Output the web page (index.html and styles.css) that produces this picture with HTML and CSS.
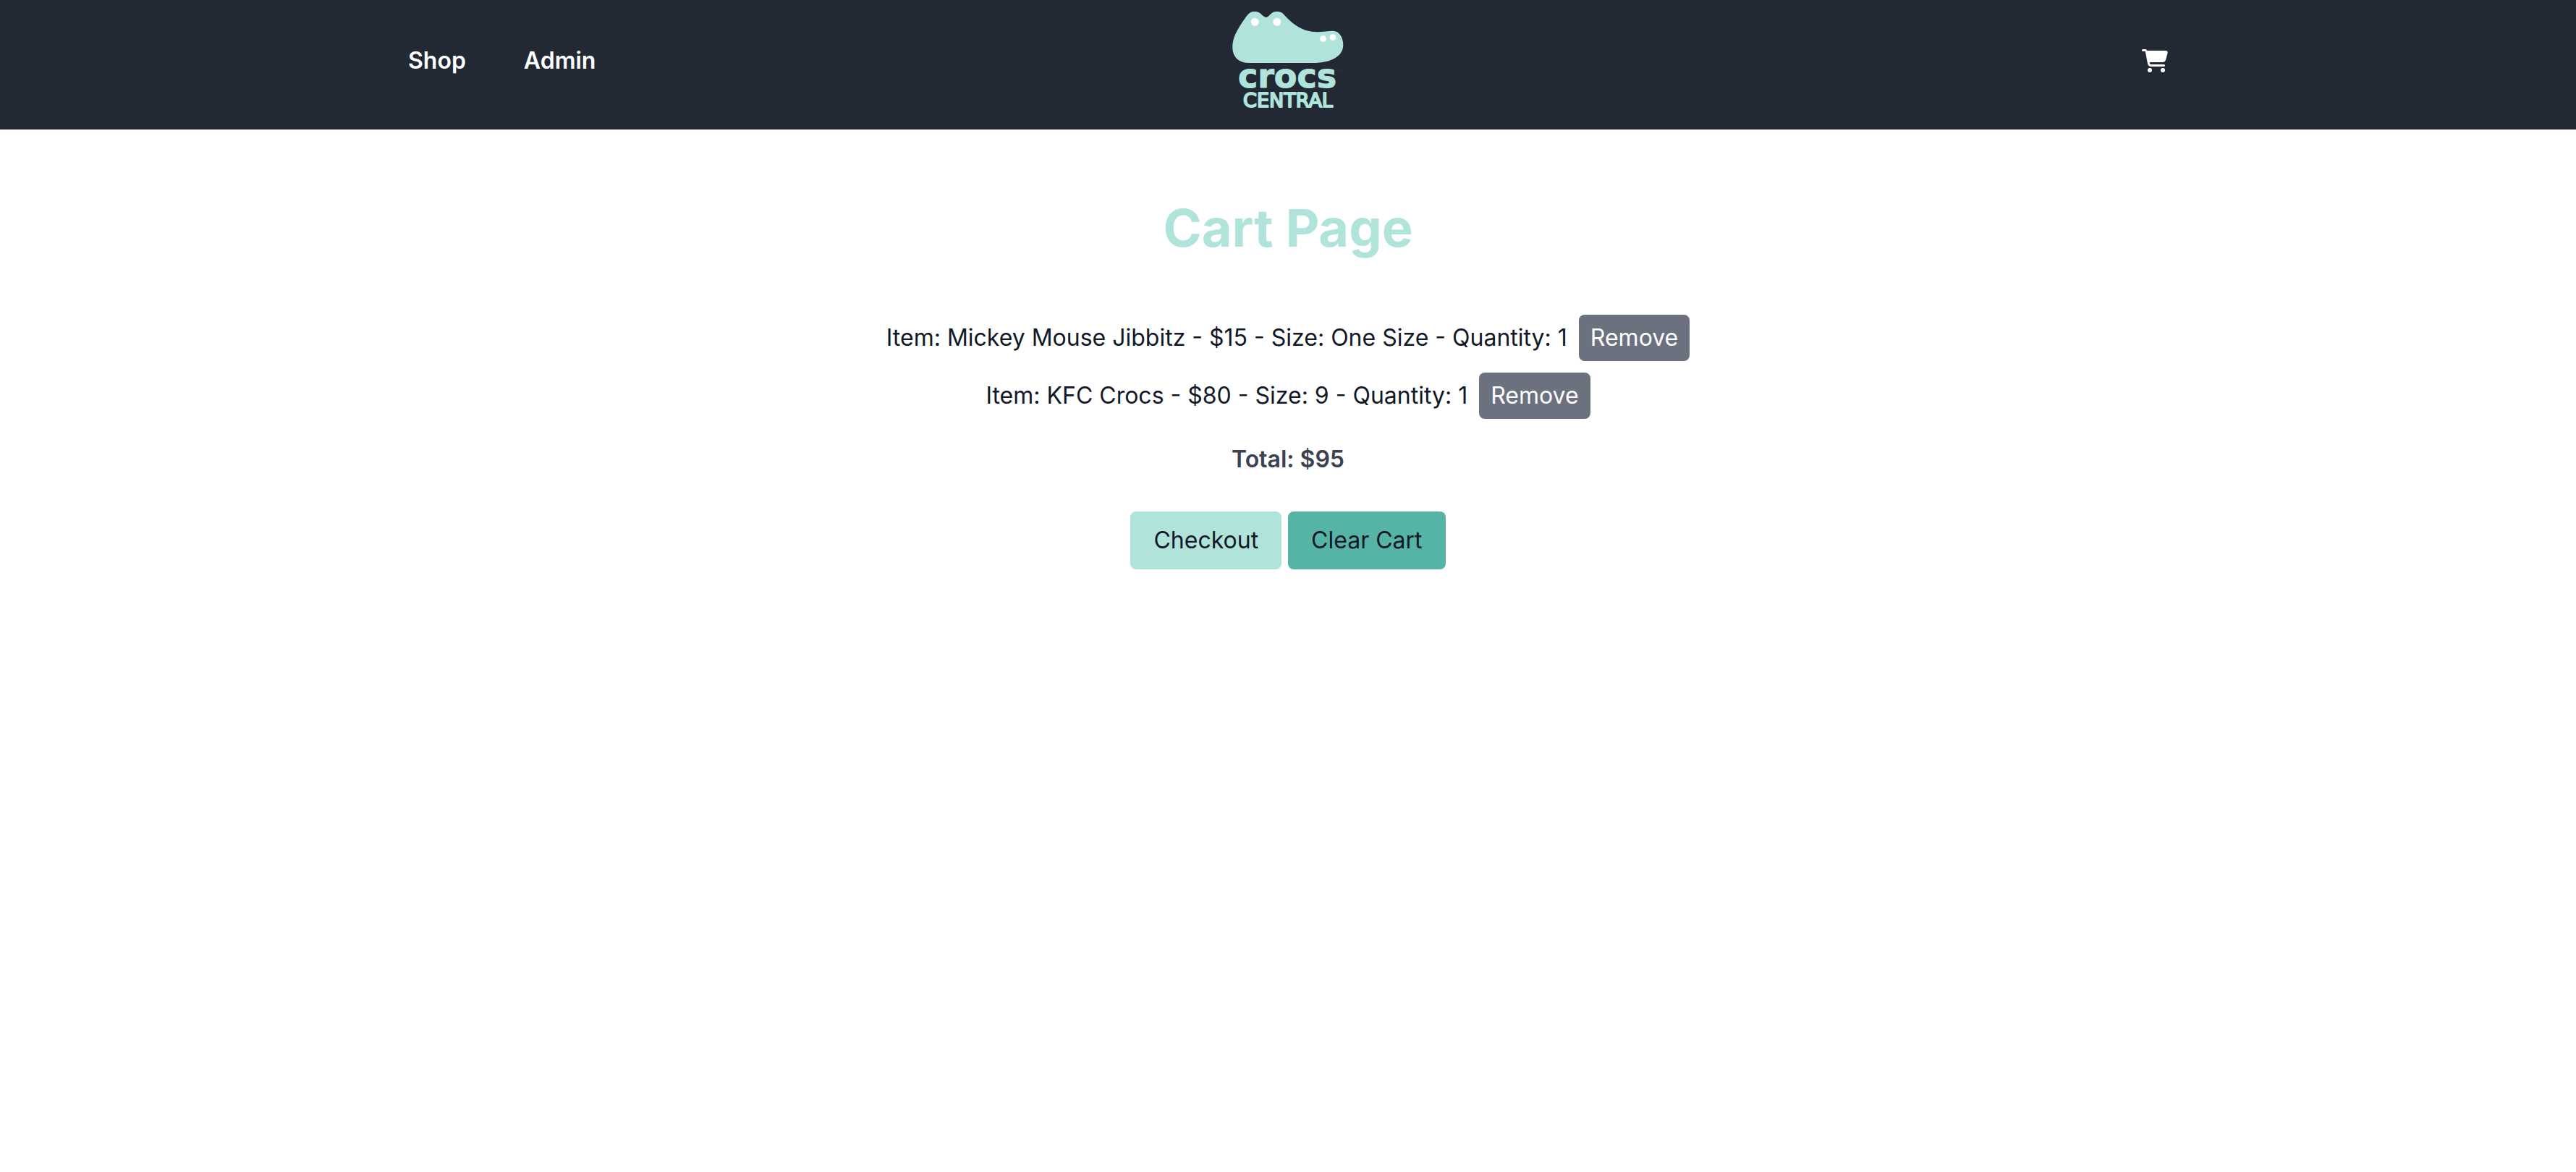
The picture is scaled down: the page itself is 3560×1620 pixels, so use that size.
FILE: index.html
```html
<!DOCTYPE html>
<html lang="en">
<head>
  <meta charset="utf-8">
  <meta name="viewport" content="width=device-width, initial-scale=1">
  <title>Cart - Crocs Central</title>
  <link rel="stylesheet" href="styles.css">
</head>
<body>
  <header class="site-header">
    <div class="header-inner">
      <nav class="nav">
        <a class="nav-link" href="#shop">Shop</a>
        <a class="nav-link" href="#admin">Admin</a>
      </nav>
      <a class="logo" href="#home" aria-label="Crocs Central">
        <svg class="logo-art" viewBox="0 0 200 167" width="200" height="167">
          <path class="mint" d="M23.3 66C23 54 28 43 40.500 25.500C46 17.500 48.500 16 54 16C60 16 62 18.500 65 21.500C68.500 24.700 71 24.700 74 21.500C77.500 18 79 16 85 16C91 16 92.500 18 97 23C108 34.500 119 42 133 43.800C145 45.300 153 42.700 162 42.700C171 42.700 176.300 52 176.300 62C176.300 78 159 87 135 87L46 87C32 87 23.600 79 23.300 66Z"/>
          <g class="eyes">
            <circle cx="54.300" cy="30.300" r="5.500"/>
            <circle cx="84.800" cy="30.300" r="5.500"/>
            <circle cx="148.500" cy="53.500" r="4.400"/>
            <circle cx="162" cy="51.700" r="4.400"/>
          </g>
          <text class="logo-name" x="99" y="121" text-anchor="middle">crocs</text>
          <text class="logo-sub" x="100" y="148" text-anchor="middle">CENTRAL</text>
          <text class="logo-tm" x="168" y="100">TM</text>
        </svg>
      </a>
      <a class="cart-link" href="#cart" aria-label="Cart">
        <svg class="cart-icon" viewBox="0 0 576 512" width="36" height="32">
          <path d="M0 24C0 10.700 10.700 0 24 0H69.500c22 0 41.500 12.800 50.600 32h411c26.300 0 45.500 25 38.600 50.400l-41 152.300c-8.500 31.400-37 53.300-69.500 53.300H170.700l5.400 28.500c2.200 11.300 12.100 19.500 23.600 19.500H488c13.300 0 24 10.700 24 24s-10.700 24-24 24H199.700c-34.600 0-64.300-24.600-70.700-58.500L77.400 54.500c-.7-3.800-4-6.500-7.900-6.500H24C10.700 48 0 37.300 0 24zM128 464a48 48 0 1 1 96 0 48 48 0 1 1 -96 0zm336-48a48 48 0 1 1 0 96 48 48 0 1 1 0-96z"/>
        </svg>
      </a>
    </div>
  </header>
  <main class="cart">
    <h1 class="cart-title">Cart Page</h1>
    <ul class="cart-items">
      <li class="cart-item">
        <span>Item: Mickey Mouse Jibbitz - $15 - Size: One Size - Quantity: 1</span>
        <button class="btn btn-remove" type="button">Remove</button>
      </li>
      <li class="cart-item">
        <span>Item: KFC Crocs - $80 - Size: 9 - Quantity: 1</span>
        <button class="btn btn-remove" type="button">Remove</button>
      </li>
    </ul>
    <p class="cart-total">Total: $95</p>
    <div class="cart-actions">
      <button class="btn btn-checkout" type="button">Checkout</button>
      <button class="btn btn-clear" type="button">Clear Cart</button>
    </div>
  </main>
</body>
</html>
```
FILE: styles.css
```css
* {
  box-sizing: border-box;
}

body {
  margin: 0;
  background: #fff;
  color: #111827;
  font-family: Inter, "Liberation Sans", sans-serif;
  font-size: 32px;
  line-height: 48px;
}

.site-header {
  background: #222935;
  padding-bottom: 12px;
}

.header-inner {
  display: grid;
  grid-template-columns: 1fr auto 1fr;
  align-items: center;
  max-width: 2560px;
  margin: 0 auto;
  padding: 0 64px;
}

.nav {
  display: flex;
  gap: 80px;
}

.nav-link {
  color: #fff;
  font-weight: 600;
  text-decoration: none;
}

.logo-art,
.cart-icon {
  display: block;
}

.mint,
.logo-name,
.logo-sub {
  fill: #b0e4db;
}

.eyes {
  fill: #fff;
}

.logo-name,
.logo-sub {
  font-family: "DejaVu Sans", sans-serif;
  stroke: #b0e4db;
  stroke-linejoin: round;
}

.logo-name {
  font-size: 46px;
  font-weight: 700;
  stroke-width: 1px;
}

.logo-sub {
  font-size: 27px;
  font-weight: 400;
  stroke-width: 2px;
}

.logo-tm {
  fill: #2b323e;
  font-size: 6px;
}

.cart-link {
  justify-self: end;
}

.cart-icon {
  fill: #fff;
}

.cart {
  display: flex;
  flex-direction: column;
  align-items: center;
  padding: 96px 64px;
}

.cart-title {
  margin: 0 0 80px;
  color: #b0e4db;
  font-size: 72px;
  font-weight: 700;
  line-height: 80px;
}

.cart-items {
  display: grid;
  gap: 16px;
  margin: 0 0 32px;
  padding: 0;
  list-style: none;
}

.cart-item {
  display: flex;
  align-items: center;
  justify-content: center;
  gap: 16px;
}

.cart-total {
  margin: 0 0 48px;
  color: #3a4150;
  font-weight: 600;
}

.cart-actions {
  display: flex;
  gap: 9px;
}

.btn {
  border: 0;
  border-radius: 8px;
  color: inherit;
  font: inherit;
  cursor: pointer;
}

.btn-remove {
  padding: 8px 16px;
  background: #6c717f;
  color: #fff;
}

.btn-checkout,
.btn-clear {
  padding: 16px 32px;
}

.btn-checkout {
  background: #b0e4db;
}

.btn-clear {
  background: #56b4a6;
}
```
